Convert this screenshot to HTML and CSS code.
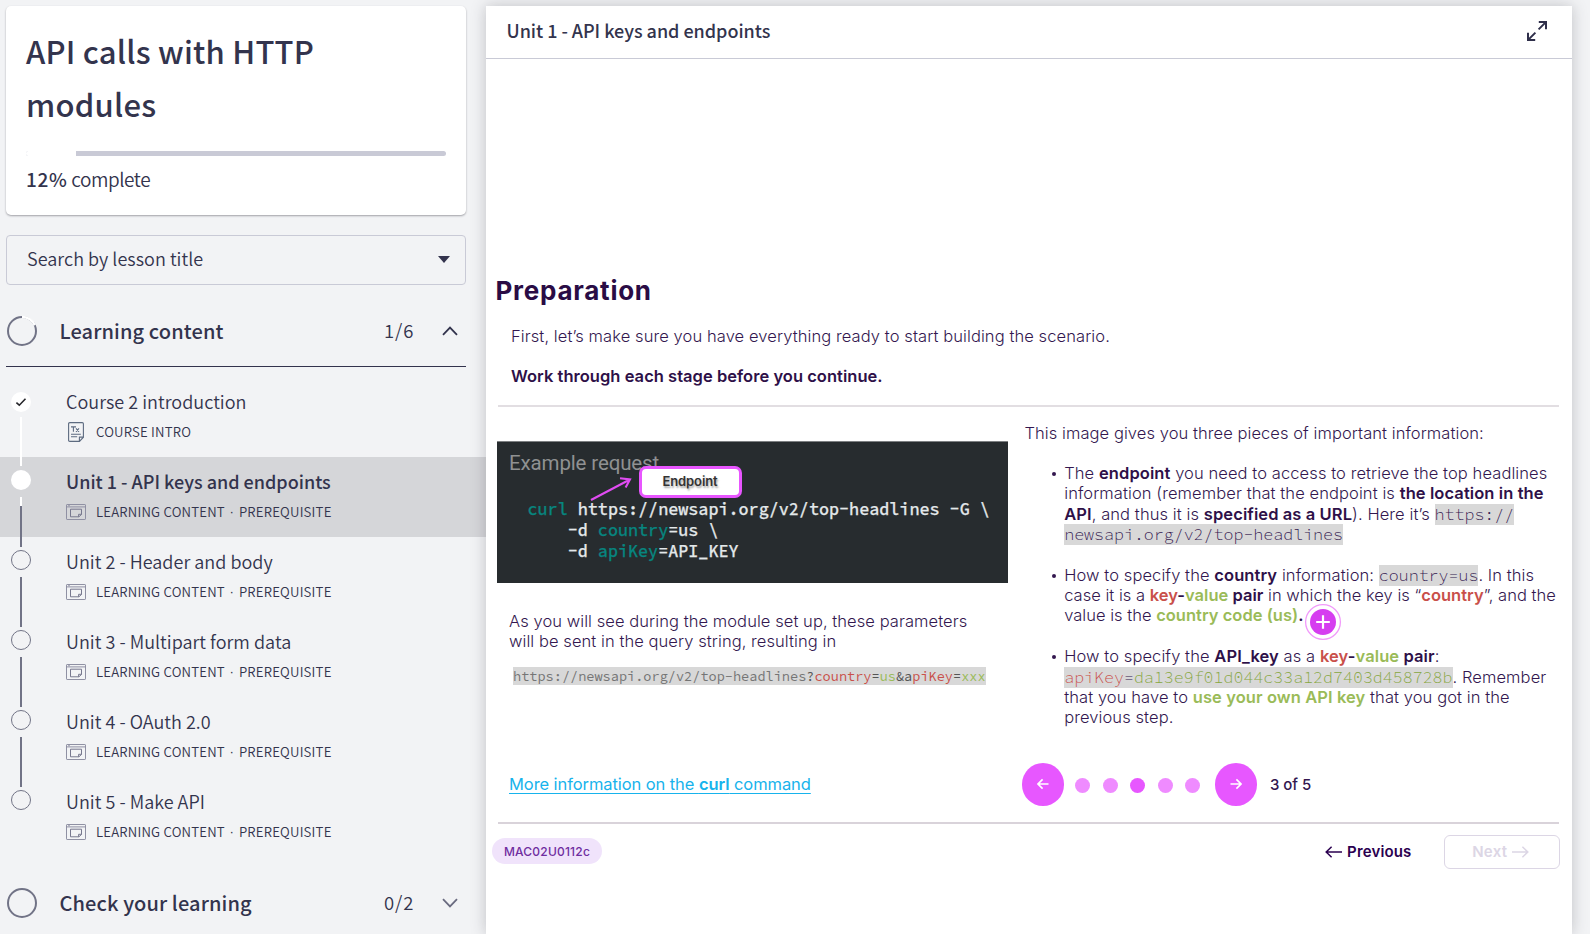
FILE: index.html
```html
<!DOCTYPE html>
<html lang="en">
<head>
<meta charset="utf-8">
<title>API calls with HTTP modules</title>
<link rel="stylesheet" href="styles.css">
</head>
<body>
<svg class="defs" width="0" height="0" aria-hidden="true">
  <symbol id="slide-icon" viewBox="0 0 20 16">
    <g fill="none" stroke="#8f90a3" stroke-width="1">
      <rect x=".5" y=".5" width="19" height="15" rx=".6"/>
      <path d="M.5 2.9h19M2.2 1.7h1.6"/>
      <path d="M4.5 5.2h11v5.3l-2.6 2.3H4.5zM12.6 12.8v-2.5h2.9" stroke="#77788e"/>
    </g>
  </symbol>
</svg>
<div class="page">
  <aside class="sidebar">
    <section class="card">
      <h1 class="card-title">API calls with HTTP<br>modules</h1>
      <div class="progress"><div class="progress-fill" style="width:50px"></div></div>
      <p class="progress-label"><b>12%</b> complete</p>
    </section>
    <div class="search"><span>Search by lesson title</span><i class="caret"></i></div>

    <div class="section section-open">
      <svg class="ring" viewBox="0 0 30 30"><circle cx="15" cy="15" r="14" fill="none" stroke="#717386" stroke-width="2"/><path d="M15 1a14 14 0 0 1 12.8 8.3" fill="none" stroke="#fff" stroke-width="2.4"/></svg>
      <span class="section-name">Learning content</span>
      <span class="count">1/6</span>
      <svg class="chevron" viewBox="0 0 16 10"><path d="M1 8.8 8 1.6l7 7.2" fill="none" stroke="#33334d" stroke-width="1.8"/></svg>
    </div>

    <ul class="lessons">
      <li class="lesson first">
        <span class="dot done"><svg viewBox="0 0 20 20"><path d="M5.4 10.6l2.9 2.6 6.2-6.4" fill="none" stroke="#26262b" stroke-width="1.6"/></svg></span>
        <i class="link white"></i>
        <div><div class="name">Course 2 introduction</div>
        <div class="meta"><svg class="doc" viewBox="0 0 16 20"><path d="M.6 1.8Q.6.6 1.8.6h12.4q1.2 0 1.2 1.2v13.4l-3.9 4.2H1.8Q.6 19.4.6 18.2z" fill="none" stroke="#5d6b80" stroke-width="1.1"/><path d="M11.4 19.2v-4.1h4M3 12.2h9.8M3 14.8h6.2M3 4.9h5M5.4 4.9v4.8M8 6.4l3 3.4M11 6.4 8 9.8" fill="none" stroke="#5d6b80" stroke-width="1.1"/></svg><span>COURSE INTRO</span></div></div>
      </li>
      <li class="lesson active">
        <span class="dot done"></span><i class="link half"></i>
        <div><div class="name">Unit 1 - API keys and endpoints</div>
        <div class="meta"><svg class="slide"><use href="#slide-icon"/></svg><span>LEARNING CONTENT</span><span class="sep">·</span><span>PREREQUISITE</span></div></div>
      </li>
      <li class="lesson">
        <span class="dot"></span><i class="link"></i>
        <div><div class="name">Unit 2 - Header and body</div>
        <div class="meta"><svg class="slide"><use href="#slide-icon"/></svg><span>LEARNING CONTENT</span><span class="sep">·</span><span>PREREQUISITE</span></div></div>
      </li>
      <li class="lesson">
        <span class="dot"></span><i class="link"></i>
        <div><div class="name">Unit 3 - Multipart form data</div>
        <div class="meta"><svg class="slide"><use href="#slide-icon"/></svg><span>LEARNING CONTENT</span><span class="sep">·</span><span>PREREQUISITE</span></div></div>
      </li>
      <li class="lesson">
        <span class="dot"></span><i class="link"></i>
        <div><div class="name">Unit 4 - OAuth 2.0</div>
        <div class="meta"><svg class="slide"><use href="#slide-icon"/></svg><span>LEARNING CONTENT</span><span class="sep">·</span><span>PREREQUISITE</span></div></div>
      </li>
      <li class="lesson">
        <span class="dot"></span>
        <div><div class="name">Unit 5 - Make API</div>
        <div class="meta"><svg class="slide"><use href="#slide-icon"/></svg><span>LEARNING CONTENT</span><span class="sep">·</span><span>PREREQUISITE</span></div></div>
      </li>
    </ul>

    <div class="section section-closed">
      <svg class="ring" viewBox="0 0 30 30"><circle cx="15" cy="15" r="14" fill="none" stroke="#717386" stroke-width="2"/></svg>
      <span class="section-name check">Check your learning</span>
      <span class="count">0/2</span>
      <svg class="chevron" viewBox="0 0 16 10"><path d="M1 1.2l7 7.2 7-7.2" fill="none" stroke="#6a6b80" stroke-width="1.8"/></svg>
    </div>
  </aside>

  <main class="viewer">
    <header class="viewer-head">
      <h2>Unit 1 - API keys and endpoints</h2>
      <svg class="expand" viewBox="0 0 20 20"><g fill="none" stroke="#2f2f4a" stroke-width="2"><path d="M11.6 8.4 18.6 1.4M11.8 1.1H19V8.3M8.4 11.6 1.4 18.6M1 11.8V19H8.2"/></g></svg>
    </header>

    <div class="slide-body">
      <h3 class="heading">Preparation</h3>
      <p class="intro">First, let’s make sure you have everything ready to start building the scenario.</p>
      <p class="intro strong">Work through each stage before you continue.</p>
      <hr class="rule thick">

      <div class="columns">
        <div class="left">
          <div class="terminal">
            <div class="terminal-title">Example request</div>
            <pre class="curl"><i>curl</i> https://newsapi.org/v2/top-headlines -G \
    -d <i>country</i>=us \
    -d <i>apiKey</i>=API_KEY</pre>
            <svg class="arrow" viewBox="0 0 44 26"><path d="M2 24 40 4M31 2.2l10 1.2-4.4 8" fill="none" stroke="#e04cf2" stroke-width="2.1"/></svg>
            <span class="callout">Endpoint</span>
          </div>
          <p class="para">As you will see during the module set up, these parameters<br>will be sent in the query string, resulting in</p>
          <div class="url"><code>https://newsapi.org/v2/top-headlines<em>?</em><span class="red">country</span><em>=</em><span class="green">us</span><em>&amp;a</em><span class="red">piKey</span><em>=</em><span class="green">xxx</span></code></div>
          <a class="more">More information on the <b>curl</b> command</a>
        </div>

        <div class="right">
          <p class="lead">This image gives you three pieces of important information:</p>
          <ul class="facts">
            <li>The <b>endpoint</b> you need to access to retrieve the top headlines<br>information (remember that the endpoint is <b>the location in the</b><br><b>API</b>, and thus it is <b>specified as a URL</b>). Here it’s <code>https://</code><br><code>newsapi.org/v2/top-headlines</code></li>
            <li>How to specify the <b>country</b> information: <code>country=us</code>. In this<br><span class="tight">case it is a <b><span class="red">key</span>-<span class="green">value</span> pair</b> in which the key is “<b class="red">country</b>”, and the</span><br><span class="tight">value is the <b class="green">country code (us)</b><b>.</b></span><svg class="hotspot" viewBox="0 0 40 40"><circle cx="20" cy="20" r="17.4" fill="#fff" stroke="#f19afa" stroke-width="1.3"/><circle cx="20" cy="20" r="13" fill="#d63df0"/><path d="M13.2 20h13.6M20 13.2v13.6" stroke="#fff" stroke-width="2.2"/></svg></li>
            <li>How to specify the <b>API_key</b> as a <b><span class="red">key</span>-<span class="green">value</span> pair</b>:<br><code><span class="red">apiKey</span>=<span class="green">da13e9f01d044c33a12d7403d458728b</span></code>. Remember<br>that you have to <b class="green">use your own API key</b> that you got in the<br>previous step.</li>
          </ul>
          <div class="pager">
            <span class="round"><svg viewBox="0 0 12 12"><path d="M11.5 6H1.2M5.6 1.4 1 6l4.6 4.6" fill="none" stroke="#fff" stroke-width="1.6"/></svg></span>
            <div class="dots"><i></i><i></i><i class="on"></i><i></i><i></i></div>
            <span class="round"><svg viewBox="0 0 12 12"><path d="M.5 6h10.3M6.4 1.4 11 6l-4.6 4.6" fill="none" stroke="#fff" stroke-width="1.6"/></svg></span>
            <span class="page-no">3 of 5</span>
          </div>
        </div>
      </div>
      <hr class="rule">

      <footer class="foot">
        <span class="badge">MAC02U0112c</span>
        <span class="prev"><svg viewBox="0 0 17 12"><path d="M17 6H1.4M6.6.8 1.2 6l5.4 5.2" fill="none" stroke="#2b0050" stroke-width="1.5"/></svg><span>Previous</span></span>
        <span class="next"><span>Next</span><svg viewBox="0 0 17 12"><path d="M0 6h15.6M10.4.8 15.8 6l-5.4 5.2" fill="none" stroke="#dcd6e5" stroke-width="1.5"/></svg></span>
      </footer>
    </div>
  </main>
</div>
</body>
</html>
```
FILE: styles.css
```css
* { box-sizing: border-box; margin: 0; padding: 0; }
body { width: 1590px; height: 934px; overflow: hidden; background: #f2f3f5; }
i { font-style: normal; }
ul { list-style: none; }
.defs { display: block; }

.page { display: flex; height: 934px; padding-top: 6px; overflow: hidden; background: #f2f3f5; }

/* Sidebar */
.sidebar { width: 486px; flex: none; padding-left: 6px; color: #33344d; font-family: "Noto Sans CJK SC", "Noto Sans", sans-serif; white-space: nowrap; }
.card { width: 460px; height: 209px; padding: 18px 20px 0; background: #fff; border-radius: 5px; box-shadow: 0 1px 2px rgba(40, 40, 50, .4); }
.card-title { font-size: 31px; line-height: 53px; font-weight: 500; letter-spacing: .22px; }
.progress { height: 5px; margin-top: 21px; background: #c9cad6; border-radius: 3px; overflow: hidden; }
.progress-fill { height: 5px; background: #fff; }
.progress-label { margin-top: 9px; font-size: 19px; line-height: 28px; font-weight: 350; letter-spacing: -.45px; }
.progress-label b { font-weight: 500; letter-spacing: .65px; color: #33344d; }
.search { display: flex; align-items: center; justify-content: space-between; width: 460px; height: 50px; margin-top: 20px; padding: 0 15px 0 20px; border: 1px solid #c9cad6; border-radius: 4px; font-size: 18px; font-weight: 350; letter-spacing: .03px; }
.search span { padding-bottom: 4px; }
.caret { margin-top: -1px; border: 6px solid transparent; border-top: 7px solid #33334d; border-bottom: 0; }

.section { display: flex; align-items: center; width: 460px; height: 71px; margin-top: 11px; padding: 0 8px 0 1px; }
.section-open { border-bottom: 1px solid #33334d; }
.section-closed { height: 70px; }
.ring { width: 30px; height: 30px; overflow: visible; }
.section-name { flex: 1; margin-left: 22.5px; padding-bottom: 2px; font-size: 20px; font-weight: 500; letter-spacing: .11px; }
.count { margin-right: 27.5px; padding-bottom: 2px; font-size: 18.5px; font-weight: 350; letter-spacing: 1px; }
.chevron { width: 16px; height: 10px; }

.lessons { margin: 10px 0 0 -6px; }
.lesson { position: relative; display: grid; grid-template-columns: 20px 1fr; column-gap: 35px; height: 80px; padding: 10px 0 0 11px; }
.active { background: #d5d6d9; }
.dot { width: 20px; height: 20px; margin-top: 3px; border: 1px solid #717386; border-radius: 50%; }
.dot.done { border: 0; background: #fff; }
.first .dot { margin-top: 5px; }
.dot svg { display: block; width: 20px; height: 20px; }
.link { position: absolute; z-index: 1; left: 20px; top: 40px; width: 2px; height: 50px; background: #717386; }
.link.white { height: 49px; background: #fff; }
.link.half { background: linear-gradient(#fff 9px, #717386 9px); }
.name { font-size: 18px; line-height: 28px; font-weight: 350; letter-spacing: .03px; }
.active .name { font-weight: 500; letter-spacing: 0; }
.meta { display: flex; align-items: center; margin-top: 7px; font-size: 13.2px; line-height: 20px; font-weight: 350; letter-spacing: .2px; }
.first .meta { margin-top: 6px; }
.meta svg { flex: none; margin-right: 10px; width: 20px; height: 16px; }
.meta .doc { width: 16px; height: 20px; margin: 1px 12px 0 2px; }
.sep { width: 14px; font-family: "Liberation Sans", sans-serif; text-align: center; }

/* Viewer */
.viewer { width: 1086px; flex: none; background: #fff; box-shadow: 0 0 14px rgba(50, 52, 62, .26); color: #33174f; font-family: Inter, "Liberation Sans", sans-serif; white-space: nowrap; position: relative; }
.viewer-head { display: flex; align-items: center; justify-content: space-between; height: 53px; padding: 0 25px 2px 20.5px; border-bottom: 1px solid #c9cad6; }
.viewer-head h2 { padding-bottom: 2px; color: #33344d; font: 500 18px "Noto Sans CJK SC", "Noto Sans", sans-serif; letter-spacing: -.03px; }
.expand { width: 20px; height: 20px; }

.slide-body { padding: 213.5px 13px 0 12px; font-size: 16.5px; font-weight: 300; letter-spacing: .09px; }
.heading { margin-left: -2.5px; font-size: 26px; line-height: 36px; font-weight: 700; letter-spacing: .75px; color: #2a0c45; }
.intro { margin: 17.5px 0 0 13px; line-height: 20px; }
.intro.strong { margin-top: 20px; letter-spacing: .03px; font-weight: 600; color: #2e1048; }
.rule { height: 1.5px; border: 0; background: #d9d3da; }
.rule.thick { height: 2px; margin-top: 19px; background: #e2dee2; }
b { font-weight: 600; color: #2e1048; }
.red { color: #c9504a; }
.green { color: #9abb58; }

.columns { display: grid; grid-template-columns: 511px 1fr; column-gap: 16.5px; height: 415px; margin-left: -1px; }
.left { padding-top: 34px; }
.terminal { position: relative; height: 142px; padding: 9px 0 0 12px; background: #272c2f; border-top: 1px solid #7d8082; }
.terminal-title { font: 400 20.5px/24px Roboto, sans-serif; letter-spacing: -.14px; color: #8f9192; }
.curl { margin: 23.5px 0 0 18.5px; font: 500 16.75px/21.4px "Source Code Pro", "DejaVu Sans Mono", monospace; letter-spacing: 0; color: #e3e8ea; -webkit-text-stroke: .25px; }
.curl i { color: #07857f; }
.arrow { position: absolute; left: 92px; top: 34px; width: 44px; height: 26px; }
.callout { position: absolute; left: 142px; top: 24px; width: 103px; height: 32px; border: 3px solid #e855ff; border-radius: 7px; background: #fff; color: #333; font-size: 13px; line-height: 24px; font-weight: 600; letter-spacing: -.1px; text-align: center; text-indent: -1px; text-shadow: 1px 2px 2px rgba(0, 0, 0, .35); }
.para { margin: 28px 0 0 12px; line-height: 20.2px; letter-spacing: .07px; }
.url { height: 18px; margin: 15.5px 0 0 16px; font-size: 0; line-height: 0; }
.url code { display: inline-block; height: 18px; background: #d8d8d8; font: 400 13.58px/19px "Source Code Pro", "DejaVu Sans Mono", monospace; letter-spacing: 0; color: #757575; }
.url em { font-style: normal; color: #555; }
.more { display: inline-block; margin: 89px 0 0 12px; line-height: 20px; font-weight: 400; letter-spacing: -.08px; color: #17b3ec; text-decoration: underline; text-decoration-thickness: 1px; text-underline-offset: 3px; text-decoration-skip-ink: none; }
.more b { color: inherit; }

.right { padding-top: 15.5px; line-height: 20.4px; }
.lead { letter-spacing: .07px; }
.facts { display: grid; row-gap: 20.3px; margin: 19.8px 0 0 39.7px; }
.facts li { position: relative; }
.facts li::before { content: ""; position: absolute; left: -12px; top: 9px; width: 4px; height: 4px; border-radius: 50%; background: #33174f; }
.facts code { font: 350 16.6px/1 "Source Code Pro", "DejaVu Sans Mono", monospace; letter-spacing: 0; background: #d8d8d8; }
.facts code .green { color: #86a63e; }
.tight { letter-spacing: .02px; }
.hotspot { position: absolute; left: 239px; top: 37px; width: 40px; height: 40px; }
.pager { display: flex; align-items: center; height: 43px; margin: 35px 0 0 -2.5px; }
.round { display: grid; flex: none; place-items: center; width: 42px; height: 42.5px; border-radius: 50%; background: #e757ff; }
.round svg { width: 12px; height: 12px; }
.dots { display: flex; gap: 12.5px; margin: 3px 14.5px 0 11px; }
.dots i { width: 15px; height: 15px; border-radius: 50%; background: #ef8bff; }
.dots .on { background: #e757ff; }
.page-no { margin-left: 13.5px; padding-top: 1px; font-size: 15px; font-weight: 500; letter-spacing: -.05px; }

.foot { display: flex; align-items: center; height: 34px; margin: 11.5px 0 0 -6px; }
.badge { width: 110px; height: 26.5px; margin-top: -2px; border-radius: 14px; background: #f0e3fb; color: #6f2da0; font-size: 12px; line-height: 27px; font-weight: 500; letter-spacing: .2px; text-align: center; }
.prev { display: flex; align-items: center; gap: 5px; margin-left: auto; margin-right: 32px; font-size: 15px; font-weight: 600; letter-spacing: .15px; color: #2b0050; }
.prev svg, .next svg { width: 17px; height: 12px; }
.prev span, .next span { padding-bottom: 1px; }
.next { display: flex; align-items: center; justify-content: center; gap: 5px; width: 116.5px; height: 34px; margin-right: -1px; padding-right: 2px; border: 1.5px solid #dcd6e5; border-radius: 6px; font-size: 15px; font-weight: 600; letter-spacing: .3px; color: #dcd6e5; }
```
